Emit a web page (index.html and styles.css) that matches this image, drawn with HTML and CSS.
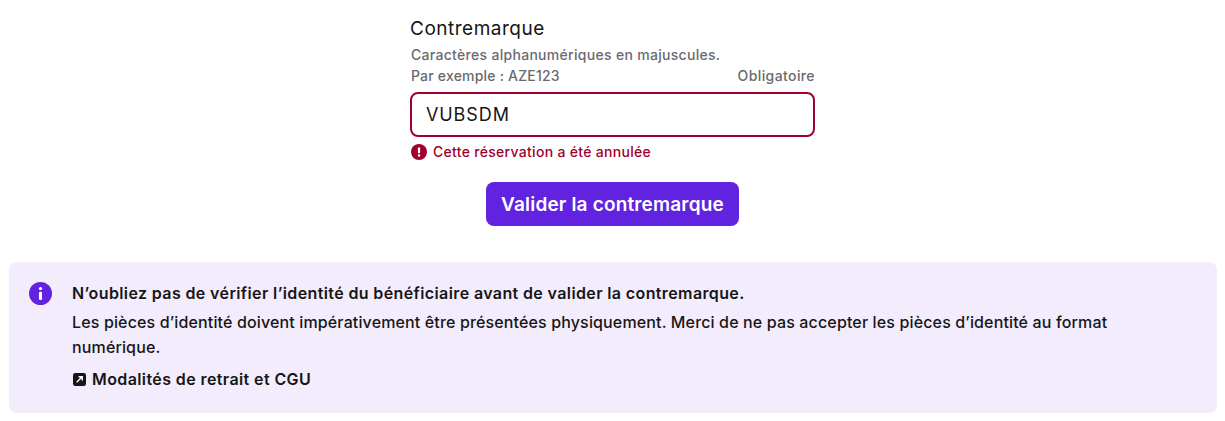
FILE: index.html
```html
<!DOCTYPE html>
<html lang="fr">
<head>
  <meta charset="UTF-8" />
  <title>Contremarque</title>
  <link rel="stylesheet" href="styles.css">
</head>
<body>
  <form class="form">
    <label class="label" for="token">Contremarque</label>
    <p class="hint">Caractères alphanumériques en majuscules.</p>
    <div class="hint-row">
      <span>Par exemple : AZE123</span>
      <span class="hint-required">Obligatoire</span>
    </div>
    <input class="input" id="token" type="text" value="VUBSDM" />
    <div class="error">
      <svg class="error-icon" viewBox="0 0 16 16" aria-hidden="true">
        <circle cx="8" cy="8" r="8" fill="#a0002d"/>
        <rect x="6.9" y="3.2" width="2.2" height="6.2" rx="1.1" fill="#fff"/>
        <circle cx="8" cy="11.6" r="1.25" fill="#fff"/>
      </svg>
      <span>Cette réservation a été annulée</span>
    </div>
    <button class="submit" type="button">Valider la contremarque</button>
  </form>

  <section class="notice">
    <svg class="notice-icon" viewBox="0 0 24 24" aria-hidden="true">
      <circle cx="12" cy="12" r="12" fill="#6123df"/>
      <circle cx="12" cy="6.9" r="1.7" fill="#fff"/>
      <rect x="10.4" y="10.2" width="3.2" height="8.6" rx="1.3" fill="#fff"/>
    </svg>
    <div class="notice-body">
      <p class="notice-title">N’oubliez pas de vérifier l’identité du bénéficiaire avant de valider la contremarque.</p>
      <p class="notice-text">Les pièces d’identité doivent impérativement être présentées physiquement. Merci de ne pas accepter les pièces d’identité au format numérique.</p>
      <a class="notice-link" href="#">
        <svg class="link-icon" viewBox="0 0 14 14" aria-hidden="true">
          <rect width="14" height="14" rx="2.5" fill="#161616"/>
          <path d="M4 10 L9.6 4.4 M6 4 H10 V8" fill="none" stroke="#fff" stroke-width="1.5"/>
        </svg>
        Modalités de retrait et CGU
      </a>
    </div>
  </section>
</body>
</html>
```

FILE: styles.css
```css
body {
  margin: 0;
  padding: 18px 8px 0 9px;
  background: #fff;
  color: #161616;
  font-family: "Inter", "Noto Sans", sans-serif;
}

.form {
  width: 405px;
  margin: 0 402px 0 auto;
  display: flex;
  flex-direction: column;
}

.label {
  font-size: 19px;
  line-height: 22px;
  letter-spacing: 0.5px;
}

.hint {
  margin: 5px 0 0;
  padding-left: 1px;
  font-size: 14px;
  line-height: 20px;
  font-weight: 500;
  letter-spacing: 0.3px;
  color: #696a6f;
}

.hint-row {
  display: flex;
  justify-content: space-between;
  margin-top: 1px;
  padding-left: 1px;
  font-size: 14px;
  line-height: 20px;
  font-weight: 500;
  letter-spacing: 0.2px;
  color: #696a6f;
}

.hint-required {
  letter-spacing: 0.4px;
}

.input {
  box-sizing: border-box;
  width: 100%;
  height: 45px;
  margin-top: 6px;
  padding: 0 14px;
  border: 2px solid #a0002d;
  border-radius: 8px;
  background: #fff;
  color: #161616;
  font: 400 18px "Inter", "Noto Sans", sans-serif;
  letter-spacing: 0.9px;
}

.error {
  display: flex;
  align-items: center;
  gap: 6px;
  margin-top: 6px;
  padding-left: 1px;
  font-size: 14px;
  line-height: 18px;
  font-weight: 500;
  letter-spacing: 0.3px;
  color: #a0002d;
}

.error-icon {
  width: 16px;
  height: 16px;
}

.submit {
  align-self: center;
  height: 44px;
  margin-top: 21px;
  padding: 0 15px;
  border: none;
  border-radius: 8px;
  background: #6123df;
  color: #fff;
  font: 600 19px "Inter", "Noto Sans", sans-serif;
  letter-spacing: 0.17px;
}

.notice {
  display: flex;
  gap: 20px;
  margin-top: 36px;
  padding: 19px 20px;
  height: 151px;
  box-sizing: border-box;
  border-radius: 8px;
  background: #f3ecfd;
}

.notice-icon {
  flex: none;
  width: 23px;
  height: 23px;
  margin-top: 1px;
}

.notice-body {
  font-size: 16px;
  line-height: 25px;
}

.notice-body p {
  margin: 0;
}

.notice-title {
  font-weight: 600;
  letter-spacing: 0.38px;
}

.notice-text {
  margin-top: 4px !important;
  font-weight: 500;
  letter-spacing: 0.14px;
  max-width: 1060px;
}

.notice-link {
  display: flex;
  align-items: center;
  gap: 6px;
  margin-top: 7px;
  color: #161616;
  font-weight: 600;
  letter-spacing: 0.4px;
  text-decoration: none;
}

.link-icon {
  width: 13px;
  height: 13px;
  margin-left: 1px;
}
```
